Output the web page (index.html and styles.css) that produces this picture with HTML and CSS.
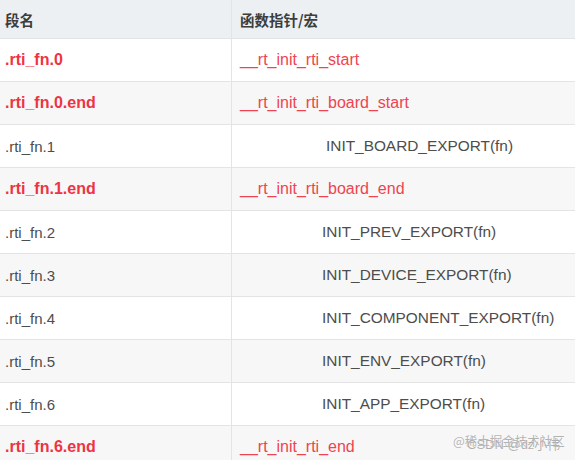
FILE: index.html
```html
<!DOCTYPE html>
<html>
<head>
<meta charset="utf-8">
<link rel="stylesheet" href="styles.css">
</head>
<body>
<div class="page">
  <table class="tbl">
    <thead>
      <tr><th class="c1">段名</th><th class="c2">函数指针/宏</th></tr>
    </thead>
    <tbody>
      <tr><td class="c1 red">.rti_fn.0</td><td class="c2 red2">__rt_init_rti_start</td></tr>
      <tr><td class="c1 red">.rti_fn.0.end</td><td class="c2 red2">__rt_init_rti_board_start</td></tr>
      <tr><td class="c1">.rti_fn.1</td><td class="c2 macro board">INIT_BOARD_EXPORT(fn)</td></tr>
      <tr><td class="c1 red">.rti_fn.1.end</td><td class="c2 red2">__rt_init_rti_board_end</td></tr>
      <tr><td class="c1">.rti_fn.2</td><td class="c2 macro">INIT_PREV_EXPORT(fn)</td></tr>
      <tr><td class="c1">.rti_fn.3</td><td class="c2 macro">INIT_DEVICE_EXPORT(fn)</td></tr>
      <tr><td class="c1">.rti_fn.4</td><td class="c2 macro">INIT_COMPONENT_EXPORT(fn)</td></tr>
      <tr><td class="c1">.rti_fn.5</td><td class="c2 macro">INIT_ENV_EXPORT(fn)</td></tr>
      <tr><td class="c1">.rti_fn.6</td><td class="c2 macro">INIT_APP_EXPORT(fn)</td></tr>
      <tr><td class="c1 red">.rti_fn.6.end</td><td class="c2 red2">__rt_init_rti_end</td></tr>
    </tbody>
  </table>
  <div class="wm wm1">@稀土掘金技术社区</div>
  <div class="wm wm2">CSDN @dz小伟</div>
</div>
</body>
</html>
```

FILE: styles.css
```css
html, body {
  margin: 0;
  padding: 0;
  background: #ffffff;
  overflow: hidden;
}
.page {
  position: relative;
  width: 575px;
  height: 460px;
  overflow: hidden;
}
.tbl {
  border-collapse: collapse;
  width: 620px;
  font-family: "Liberation Sans", Arial, "Noto Sans CJK SC", sans-serif;
  font-size: 15px;
  color: #4d4d4d;
}
.tbl th {
  height: 38px;
  padding: 0;
  background: #edf0f2;
  text-align: left;
  font-family: "Noto Sans CJK SC", sans-serif;
  font-weight: bold;
  font-size: 14.5px;
  color: #3d3d3d;
  border-bottom: 1px solid #e2e4e6;
  vertical-align: middle;
}
.tbl td {
  height: 42px;
  padding: 0;
  border-bottom: 1px solid #e4e4e4;
  vertical-align: middle;
  white-space: nowrap;
}
.tbl tbody tr:nth-child(even) td {
  background: #f7f7f7;
}
.c1 {
  width: 226px;
  padding-left: 5px !important;
  border-right: 1px solid #e4e4e4;
}
.c2 {
  padding-left: 8px !important;
}
.red {
  color: #ee3342;
  font-weight: bold;
  font-size: 16px;
}
.red2 {
  color: #ee4451;
  font-size: 16px;
}
.macro {
  padding-left: 90px !important;
  font-size: 15.4px;
  color: #4d4d4d;
}
.macro.board {
  padding-left: 94px !important;
}
.wm {
  position: absolute;
  white-space: nowrap;
  text-shadow: 0 0 1px #fff;
}
.wm1 {
  left: 453px;
  top: 431px;
  font-family: "Noto Sans CJK SC", sans-serif;
  font-size: 12.5px;
  color: rgba(165,165,165,0.85);
}
.wm2 {
  left: 467px;
  top: 434px;
  font-family: "Liberation Sans", "Noto Sans CJK SC", sans-serif;
  font-size: 13px;
  color: rgba(150,150,150,0.75);
}
```
